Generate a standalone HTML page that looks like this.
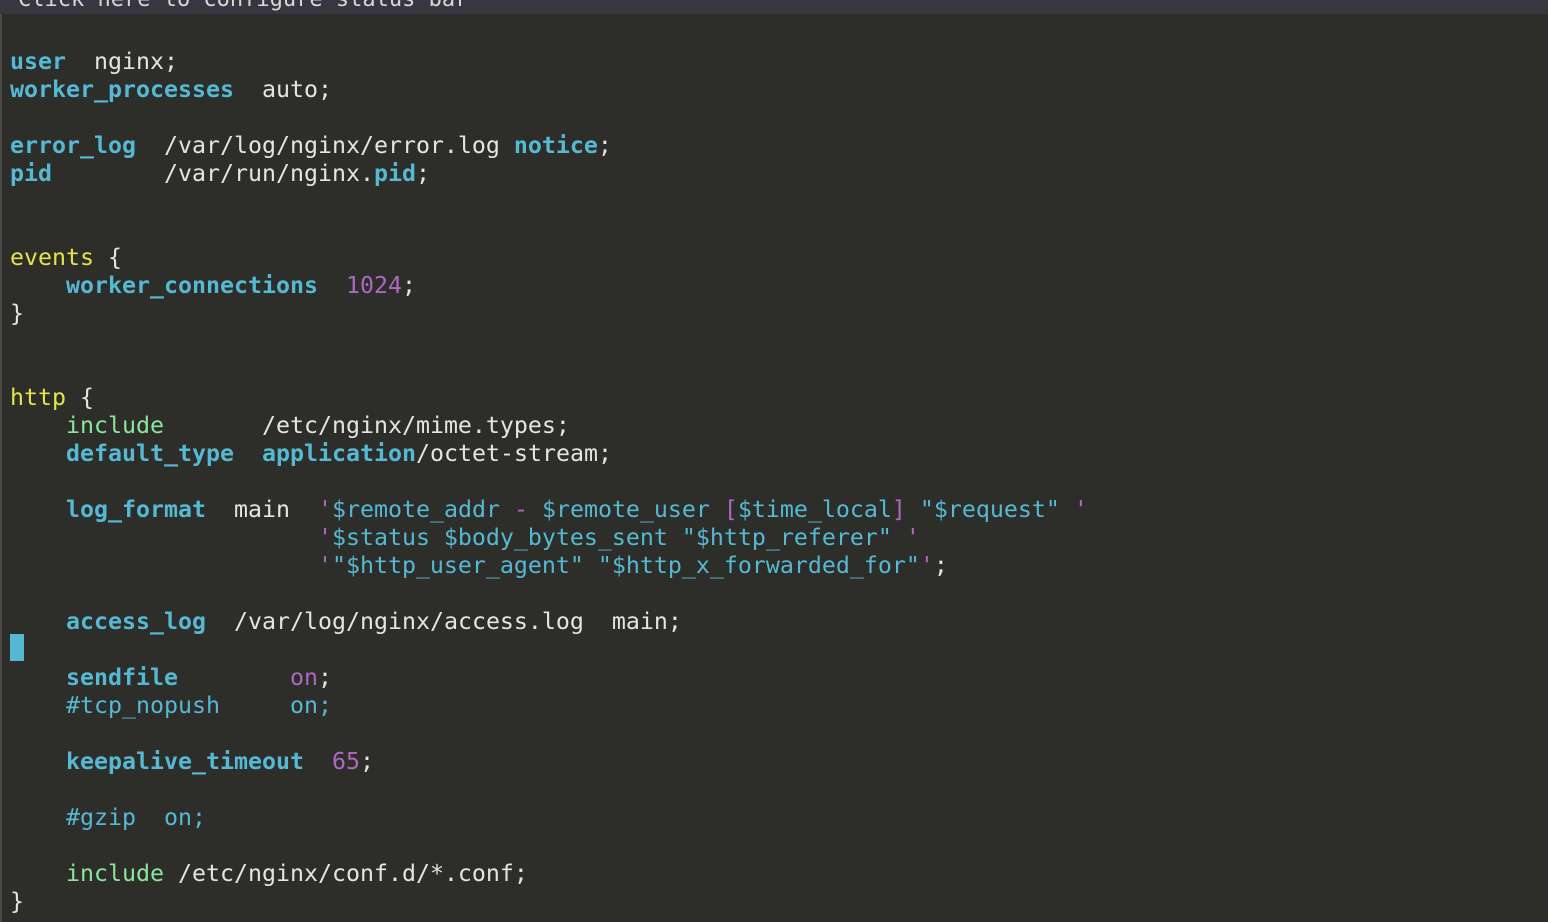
<!DOCTYPE html>
<html><head><meta charset="utf-8"><style>
html,body{margin:0;padding:0;}
body{width:1548px;height:922px;background:#2d2d2a;overflow:hidden;position:relative;}
#bar{position:absolute;left:0;top:0;width:1548px;height:14px;background:#38363f;overflow:hidden;}
#bar span{position:absolute;left:18px;top:-13px;font:22px "DejaVu Sans Mono",monospace;color:#d8d8d8;white-space:pre;}
#lb{position:absolute;left:0;top:14px;width:2px;height:908px;background:#4a4a48;}
pre{position:absolute;left:10px;top:48px;margin:0;font-family:"DejaVu Sans Mono","Liberation Mono",monospace;font-size:23.25px;line-height:28px;color:#e4e4e4;}
.k{color:#56b9d4;font-weight:bold}
.c{color:#56b9d4}
.y{color:#e6e34a}
.g{color:#8ee69a}
.p{color:#b067c2}
#cur{position:absolute;left:10px;top:634px;width:14px;height:27px;background:#56b9d4;}
</style></head><body>
<div id="bar"><span>Click here to configure status bar</span></div>
<div id="lb"></div>
<pre><span class="k">user</span>  nginx;
<span class="k">worker_processes</span>  auto;

<span class="k">error_log</span>  /var/log/nginx/error.log <span class="k">notice</span>;
<span class="k">pid</span>        /var/run/nginx.<span class="k">pid</span>;


<span class="y">events</span> {
    <span class="k">worker_connections</span>  <span class="p">1024</span>;
}


<span class="y">http</span> {
    <span class="g">include</span>       /etc/nginx/mime.types;
    <span class="k">default_type</span>  <span class="k">application</span>/octet-stream;

    <span class="k">log_format</span>  main  <span class="p">'</span><span class="c">$remote_addr </span><span class="p">-</span><span class="c"> $remote_user </span><span class="p">[</span><span class="c">$time_local</span><span class="p">]</span><span class="c"> "$request" </span><span class="p">'</span>
                      <span class="p">'</span><span class="c">$status $body_bytes_sent "$http_referer" </span><span class="p">'</span>
                      <span class="p">'</span><span class="c">"$http_user_agent" "$http_x_forwarded_for"</span><span class="p">'</span>;

    <span class="k">access_log</span>  /var/log/nginx/access.log  main;

    <span class="k">sendfile</span>        <span class="p">on</span>;
    <span class="c">#tcp_nopush     on;</span>

    <span class="k">keepalive_timeout</span>  <span class="p">65</span>;

    <span class="c">#gzip  on;</span>

    <span class="g">include</span> /etc/nginx/conf.d/*.conf;
}</pre>
<div id="cur"></div>
</body></html>
